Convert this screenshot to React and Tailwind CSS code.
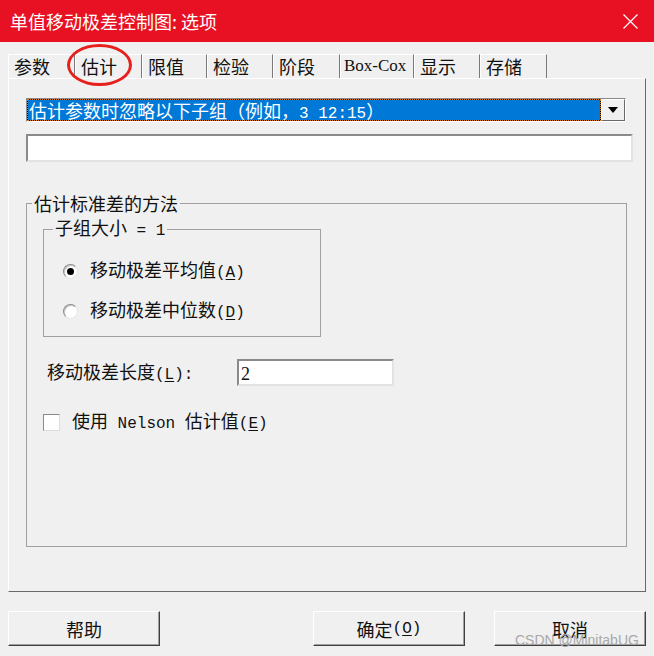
const tabs = [
  { t: "参数", w: "w-[67px]" },
  { t: "估计", w: "w-[67px]" },
  { t: "限值", w: "w-[65px]" },
  { t: "检验", w: "w-[66px]" },
  { t: "阶段", w: "w-[67px]" },
  { t: "Box-Cox", w: "w-[74px]", serif: true },
  { t: "显示", w: "w-[66px]" },
  { t: "存储", w: "w-[67px]" },
];

const M = ({ children }) => (
  <span className="[font-family:'Liberation_Mono',monospace] text-[16px]">{children}</span>
);

const U = ({ children }) => <span className="underline underline-offset-2">{children}</span>;

function Radio({ checked }) {
  return (
    <div className="w-[15px] h-[15px] rounded-full bg-white border border-t-[#8a8a8a] border-l-[#8a8a8a] border-r-[#e6e6e6] border-b-[#e6e6e6] shadow-[inset_1px_1px_0_#c8c8c8] flex items-center justify-center">
      {checked && <div className="w-[7px] h-[7px] rounded-full bg-black" />}
    </div>
  );
}

function Btn({ children, className }) {
  return (
    <div
      className={
        "w-[152px] h-[35px] flex items-center justify-center border border-t-white border-l-white border-r-[#404040] border-b-[#404040] shadow-[inset_-1px_-1px_0_#a0a0a0] " +
        className
      }
    >
      {children}
    </div>
  );
}

export default function App() {
  return (
    <div className="relative w-[654px] h-[656px] overflow-hidden bg-[#f0f0f0] text-[#111] [font-family:'Noto_Sans_CJK_SC',sans-serif] text-[18px] leading-[20px]">
      {/* title bar */}
      <div className="h-[42px] bg-[#e81123] flex items-center justify-between pl-[10px] pr-[16px] text-white">
        <span className="text-[18px] leading-[24px]">单值移动极差控制图: 选项</span>
        <svg width="15" height="15" viewBox="0 0 15 15">
          <path d="M0.5 0.5 L14.5 14.5 M14.5 0.5 L0.5 14.5" stroke="white" strokeWidth="1.2" fill="none" />
        </svg>
      </div>

      {/* tabs */}
      <div className="flex pl-[8px] mt-[12px] h-[24px]">
        {tabs.map((t) => (
          <div
            key={t.t}
            className={
              "h-[24px] border-t border-l border-r border-t-white border-l-white border-r-[#7a7a7a] leading-[22px] whitespace-nowrap " +
              t.w +
              (t.serif ? " [font-family:'Liberation_Serif',serif] text-[17px] pl-[3px]" : " pl-[5px]")
            }
          >
            {t.t}
          </div>
        ))}
      </div>

      {/* panel */}
      <div className="mx-[8px] h-[514px] border border-t-white border-l-white border-r-[#696969] border-b-[#696969] flex flex-col pl-[17px]">
        {/* combobox */}
        <div className="mt-[19px] w-[600px] h-[24px] flex border border-t-[#8a8a8a] border-l-[#8a8a8a] border-r-white border-b-white">
          <div className="flex-1 bg-black">
            <div className="h-full border border-dotted border-[#e07a10] bg-[#0078d7] bg-clip-padding text-white pl-[1px] leading-[20px] whitespace-nowrap">
              估计参数时忽略以下子组（例如，<M>3 12:15</M>）
            </div>
          </div>
          <div className="w-[24px] h-full bg-[#f0f0f0] border border-t-white border-l-white border-r-[#696969] border-b-[#696969] flex items-center justify-center">
            <svg width="10" height="6" viewBox="0 0 10 6">
              <path d="M0 0 L10 0 L5 6 Z" fill="black" />
            </svg>
          </div>
        </div>

        {/* text input */}
        <div className="mt-[12px] w-[607px] h-[28px] bg-white border-2 border-t-[#8a8a8a] border-l-[#8a8a8a] border-r-[#e3e3e3] border-b-[#e3e3e3]" />

        {/* outer group */}
        <fieldset className="mt-[32px] w-[601px] h-[353px] min-w-0 border border-[#a0a0a0] flex flex-col">
          <legend className="ml-[5px] px-[2px] leading-[18px]">估计标准差的方法</legend>

          <fieldset className="mt-[6px] ml-[16px] w-[278px] h-[119px] min-w-0 border border-[#a0a0a0] flex flex-col">
            <legend className="ml-[9px] px-[2px] leading-[18px]">
              子组大小<M> = 1</M>
            </legend>
            <div className="mt-[21px] ml-[19px] flex items-center h-[20px]">
              <Radio checked />
              <span className="ml-[12px]">
                移动极差平均值<M>(<U>A</U>)</M>
              </span>
            </div>
            <div className="mt-[20px] ml-[19px] flex items-center h-[20px]">
              <Radio />
              <span className="ml-[12px]">
                移动极差中位数<M>(<U>D</U>)</M>
              </span>
            </div>
          </fieldset>

          <div className="mt-[22px] ml-[20px] flex items-center h-[27px]">
            <span className="w-[190px]">
              移动极差长度<M>(<U>L</U>):</M>
            </span>
            <div className="w-[157px] h-[27px] bg-white border-2 border-t-[#8a8a8a] border-l-[#8a8a8a] border-r-[#e3e3e3] border-b-[#e3e3e3] pl-[2px] leading-[22px]">
              <span className="[font-family:'Liberation_Serif',serif] text-[18px]">2</span>
            </div>
          </div>

          <div className="mt-[26px] ml-[16px] flex items-center h-[20px]">
            <div className="w-[17px] h-[17px] bg-white border border-t-[#8a8a8a] border-l-[#8a8a8a] border-r-[#dcdcdc] border-b-[#dcdcdc]" />
            <span className="ml-[12px] whitespace-nowrap">
              使用<M> Nelson </M>估计值<M>(<U>E</U>)</M>
            </span>
          </div>
        </fieldset>
      </div>

      {/* buttons */}
      <div className="mt-[19px] px-[8px] flex">
        <Btn>帮助</Btn>
        <Btn className="ml-[153px]">
          确定<M>(<U>O</U>)</M>
        </Btn>
        <Btn className="ml-[29px]">取消</Btn>
      </div>

      {/* overlays */}
      <div className="absolute left-[67px] top-[44px] w-[65px] h-[42px] rounded-[50%] border-[3px] border-[#e8201c]" />
      <div className="absolute left-[515px] top-[631px] [font-family:'Liberation_Sans',sans-serif] text-[14px] leading-[18px] text-[#a8a8a8]">
        CSDN @MinitabUG
      </div>
    </div>
  );
}
